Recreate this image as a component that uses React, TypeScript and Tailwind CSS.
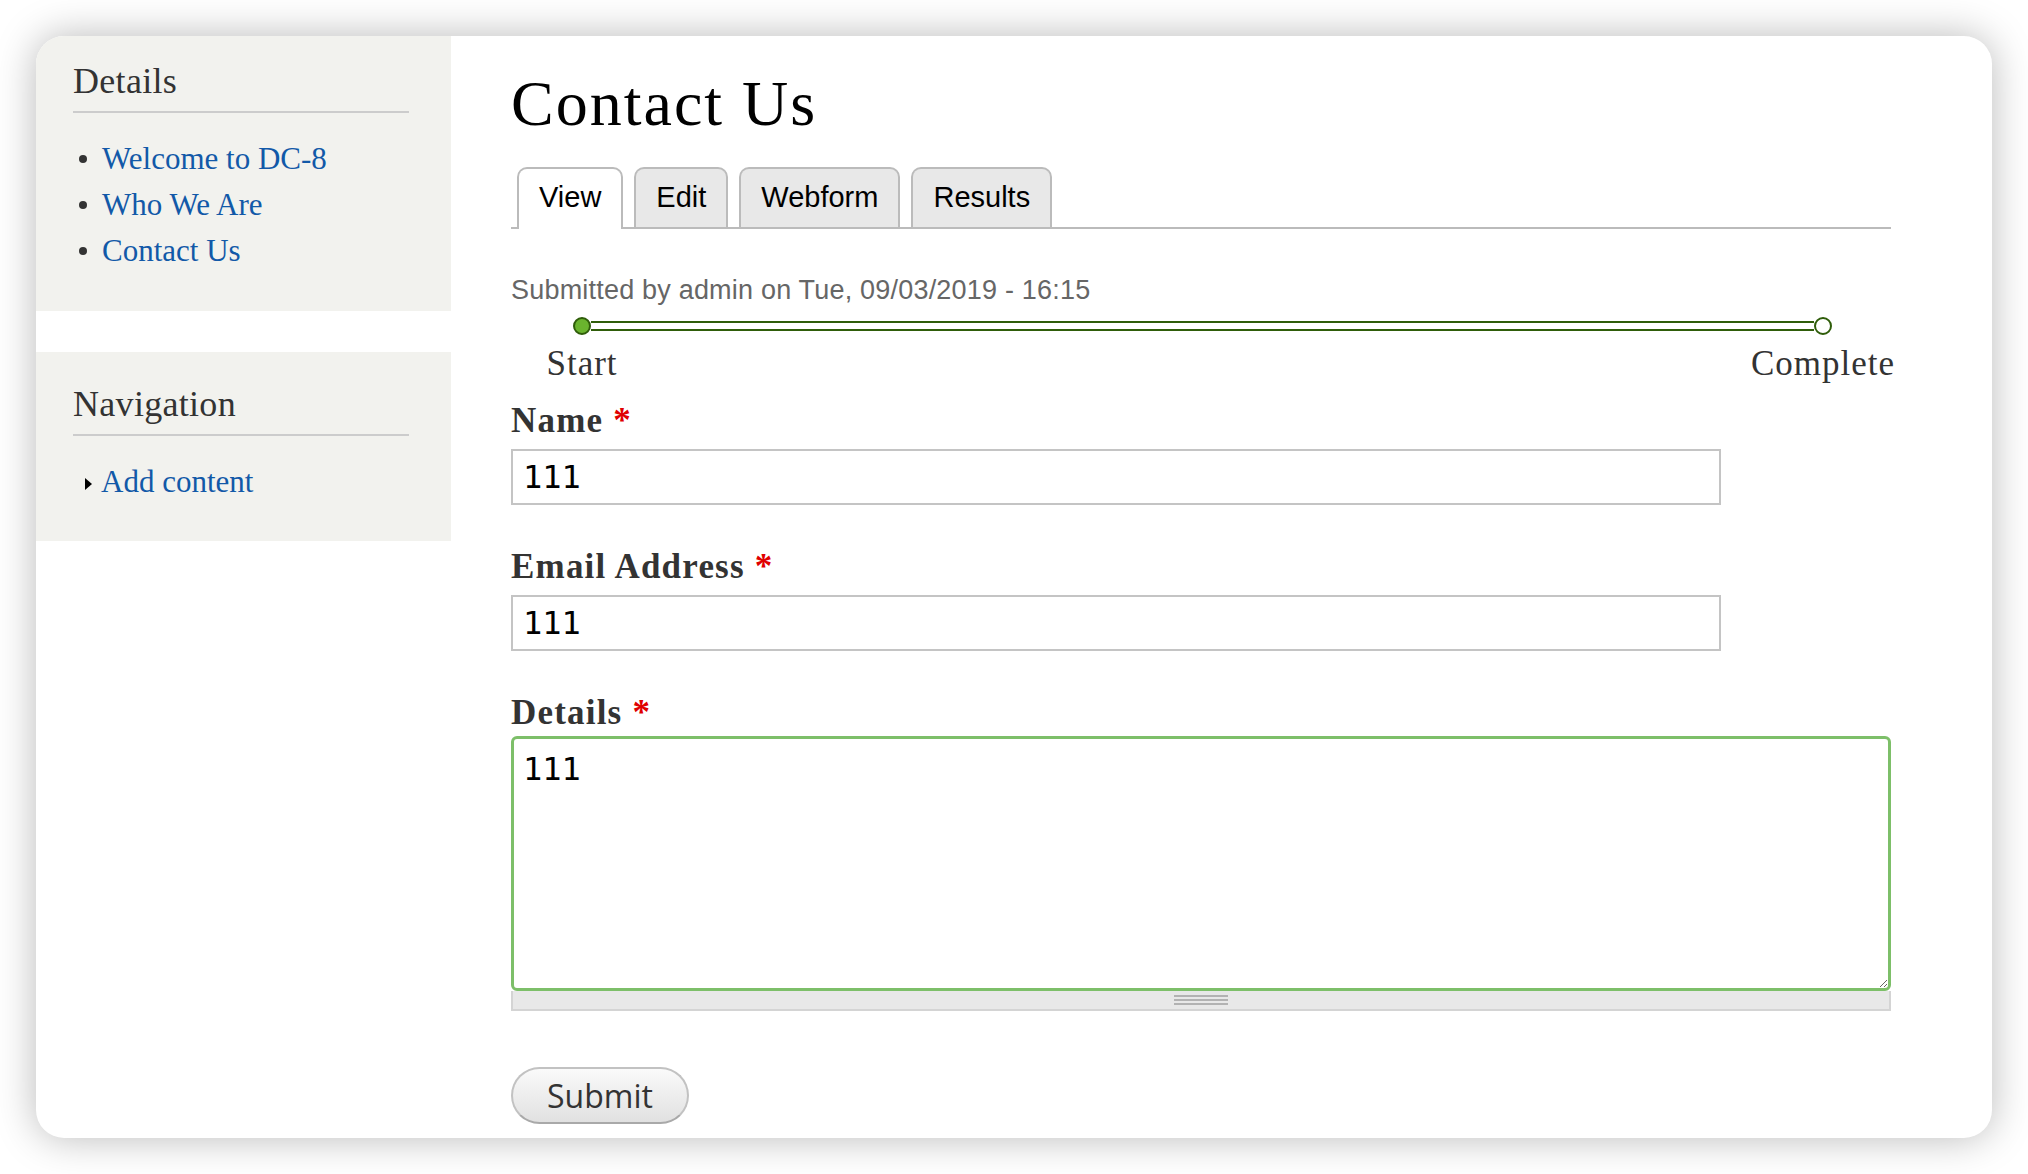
import React from 'react';

const detailLinks = ['Welcome to DC-8', 'Who We Are', 'Contact Us'];
const tabs = ['View', 'Edit', 'Webform', 'Results'];

const SidebarBlock: React.FC<{ title: string; className: string; children: React.ReactNode }> = ({
  title,
  className,
  children,
}) => (
  <section className={`bg-[#f2f2ee] pl-[37px] pr-[42px] ${className}`}>
    <h2 className="border-b-2 border-[#cccccc] pb-2 text-[36px] leading-[44px] tracking-[0.3px] text-[#333]">
      {title}
    </h2>
    {children}
  </section>
);

const Field: React.FC<{ label: string; className: string; children: React.ReactNode }> = ({
  label,
  className,
  children,
}) => (
  <div className={className}>
    <label className="block text-[35px] font-bold leading-[40px] tracking-[1.2px] text-[#333]">
      {label} <span className="text-[#e00000]">*</span>
    </label>
    {children}
  </div>
);

export default function App() {
  return (
    <div className="min-h-screen bg-white p-[36px] font-['Liberation_Serif',serif]">
      <div className="flex h-[1102px] w-[1956px] overflow-hidden rounded-[28px] bg-white shadow-[0_0_40px_rgba(0,0,0,0.28)]">
        {/* Sidebar */}
        <aside className="w-[415px] shrink-0">
          <SidebarBlock title="Details" className="pt-[23px] pb-[37px]">
            <ul className="mt-[23px]">
              {detailLinks.map((link) => (
                <li key={link} className="flex items-center text-[31px] leading-[46px]">
                  <span className="ml-[6px] mr-[15px] h-[8px] w-[8px] shrink-0 rounded-full bg-[#333]" />
                  <a href="#" className="text-[#1259a8]">
                    {link}
                  </a>
                </li>
              ))}
            </ul>
          </SidebarBlock>

          <SidebarBlock title="Navigation" className="mt-[41px] pt-[30px] pb-[36px]">
            <ul className="mt-[23px]">
              <li className="flex items-center text-[31px] leading-[46px]">
                <span className="ml-[12px] mr-[9px] mt-[4px] h-0 w-0 border-y-[6px] border-l-[7px] border-y-transparent border-l-black" />
                <a href="#" className="text-[#1259a8]">
                  Add content
                </a>
              </li>
            </ul>
          </SidebarBlock>
        </aside>

        {/* Main */}
        <main className="flex-1 pl-[60px] pr-[101px] pt-[36px]">
          <h1 className="text-[64px] leading-[64px] tracking-[2px] text-black">Contact Us</h1>

          <div className="mt-[31px] flex items-end gap-[11px] border-b-2 border-[#bbbbbb] pl-[6px] font-['Liberation_Sans',Arial,sans-serif] text-[29px] text-black">
            {tabs.map((tab, i) =>
              i === 0 ? (
                <a
                  key={tab}
                  href="#"
                  className="-mb-[2px] flex h-[62px] items-center rounded-t-[10px] border-2 border-b-0 border-[#bbbbbb] bg-white px-[20px] pb-[2px]"
                >
                  {tab}
                </a>
              ) : (
                <a
                  key={tab}
                  href="#"
                  className="flex h-[60px] items-center rounded-t-[10px] border-2 border-b-0 border-[#bbbbbb] bg-[#e8e8e8] px-[20px]"
                >
                  {tab}
                </a>
              ),
            )}
          </div>

          <p className="mt-[45px] font-['Liberation_Sans',Arial,sans-serif] text-[27px] leading-[32px] tracking-[0.2px] text-[#666]">
            Submitted by admin on Tue, 09/03/2019 - 16:15
          </p>

          {/* Progress */}
          <div className="ml-[62px] mr-[59px] mt-[11px] flex items-center">
            <span className="h-[18px] w-[18px] shrink-0 rounded-full border-2 border-[#2f5d0a] bg-[#6ab42e]" />
            <span className="h-[10px] flex-1 border-y-2 border-[#2f5d0a]" />
            <span className="h-[18px] w-[18px] shrink-0 rounded-full border-2 border-[#2f5d0a] bg-white" />
          </div>
          <div className="ml-[62px] mr-[59px] mt-[9px] flex justify-between text-[35px] leading-[40px] tracking-[1px] text-[#333]">
            <span className="flex w-[18px] justify-center whitespace-nowrap">Start</span>
            <span className="flex w-[18px] justify-center whitespace-nowrap">Complete</span>
          </div>

          <Field label="Name" className="mt-[17px]">
            <input
              readOnly
              value="111"
              className="mt-[8px] block h-[56px] w-[1210px] border-2 border-[#c4c4c4] pl-[10px] font-['DejaVu_Sans_Mono',monospace] text-[32px] text-black outline-none"
            />
          </Field>

          <Field label="Email Address" className="mt-[42px]">
            <input
              readOnly
              value="111"
              className="mt-[8px] block h-[56px] w-[1210px] border-2 border-[#c4c4c4] pl-[10px] font-['DejaVu_Sans_Mono',monospace] text-[32px] text-black outline-none"
            />
          </Field>

          <Field label="Details" className="mt-[42px]">
            <textarea
              readOnly
              defaultValue="111"
              className="mt-[3px] block h-[255px] w-full resize-y rounded-[6px] border-[3px] border-[#7dbf69] pl-[9px] pt-[11px] font-['DejaVu_Sans_Mono',monospace] text-[32px] leading-[38px] text-black outline-none"
            />
            <div className="flex h-[20px] items-center justify-center border-2 border-t-0 border-[#d4d4d4] bg-[#e8e8e8]">
              <div className="flex w-[54px] flex-col gap-[2px]">
                <span className="h-[2px] bg-[#b2b2b2]" />
                <span className="h-[2px] bg-[#b2b2b2]" />
                <span className="h-[2px] bg-[#b2b2b2]" />
              </div>
            </div>
          </Field>

          <button
            type="button"
            className="mt-[56px] h-[57px] rounded-full border-2 border-[#c2c2c2] border-b-[#a9a9a9] bg-linear-to-b from-[#fafafa] to-[#e1e1e1] px-[34px] font-['Open_Sans',sans-serif] text-[32px] text-[#333]"
          >
            Submit
          </button>
        </main>
      </div>
    </div>
  );
}
